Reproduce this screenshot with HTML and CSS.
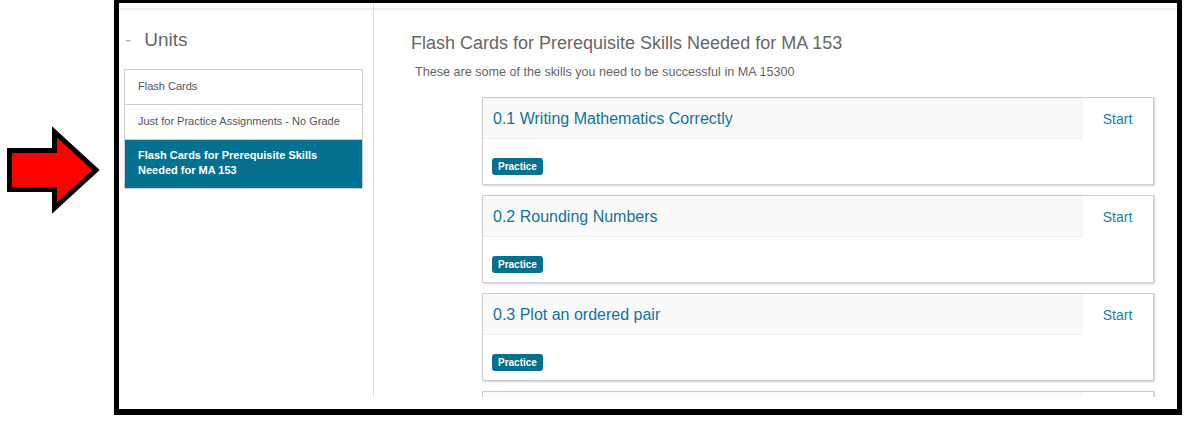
FILE: index.html
```html
<!DOCTYPE html>
<html lang="en">
<head>
  <meta charset="UTF-8">
  <meta name="viewport" content="width=device-width, initial-scale=1">
  <title>Flash Cards for Prerequisite Skills</title>
  <link rel="stylesheet" href="styles.css">
</head>
<body>

<div class="pointer">
  <svg width="110" height="100" viewBox="0 0 110 100">
    <polygon points="9.5,30.5 54.5,30.5 54.5,12 96,50 54.5,88 54.5,69.5 9.5,69.5" fill="#ff0000" stroke="#000" stroke-width="5" stroke-linejoin="miter"></polygon>
  </svg>
</div>

<div class="frame">
  <div class="cols">
    <div class="sidebar">
      <h2 class="units-title"><span class="dash">-</span>Units</h2>
      <div class="unit-list">
        <div class="unit">Flash Cards</div>
        <div class="unit">Just for Practice Assignments - No Grade</div>
        <div class="unit active">Flash Cards for Prerequisite Skills Needed for MA 153</div>
      </div>
    </div>

    <div class="main">
      <h1 class="page-title">Flash Cards for Prerequisite Skills Needed for MA 153</h1>
      <p class="intro">These are some of the skills you need to be successful in MA 15300</p>

      <div class="cards">
        <div class="card">
          <div class="card-head">
            <div class="card-title">0.1 Writing Mathematics Correctly</div>
            <div class="card-start">Start</div>
          </div>
          <div class="card-body"><span class="badge">Practice</span></div>
        </div>
        <div class="card">
          <div class="card-head">
            <div class="card-title">0.2 Rounding Numbers</div>
            <div class="card-start">Start</div>
          </div>
          <div class="card-body"><span class="badge">Practice</span></div>
        </div>
        <div class="card">
          <div class="card-head">
            <div class="card-title">0.3 Plot an ordered pair</div>
            <div class="card-start">Start</div>
          </div>
          <div class="card-body"><span class="badge">Practice</span></div>
        </div>
        <!-- next card is cut off by the scroll area -->
        <div class="card">
          <div class="card-head">
            <div class="card-title"></div>
            <div class="card-start"></div>
          </div>
          <div class="card-body"></div>
        </div>
      </div>
    </div>
  </div>
</div>

</body>
</html>
```

FILE: styles.css
```css
body {
  margin: 0;
  font-family: "Liberation Sans", Arial, sans-serif;
  background: #fff;
  display: flex;
  align-items: flex-start;
}
.pointer {
  width: 114px;
  flex-shrink: 0;
}
.pointer svg {
  display: block;
  margin-top: 120px;
}
.frame {
  width: 1068px;
  box-sizing: border-box;
  border: 5px solid #000;
  border-top-width: 3px;
  border-bottom-width: 6px;
  padding-bottom: 12px;
  flex-shrink: 0;
}
.cols {
  display: flex;
  height: 394px;
  overflow: hidden;
  background: linear-gradient(#eee, #eee) no-repeat 0 5px / 100% 2px;
}
.sidebar {
  width: 255px;
  box-sizing: border-box;
  border-right: 1px solid #ddd;
  padding: 26px 10px 0 5px;
  flex-shrink: 0;
}
.units-title {
  margin: 0 0 18px;
  font-size: 19px;
  line-height: 22px;
  font-weight: normal;
  color: #666;
}
.units-title .dash {
  color: #aaa;
  padding: 0 13px 0 1px;
}
.unit-list {
  border: 1px solid #ccc;
}
.unit {
  font-size: 11px;
  line-height: 14px;
  color: #555;
  padding: 9px 13px 11px;
  border-top: 1px solid #ccc;
}
.unit:first-child {
  border-top: none;
}
.unit.active {
  background: #047191;
  color: #fff;
  font-weight: bold;
  line-height: 15px;
  padding: 8px 24px 10px 13px;
}
.main {
  flex: 1;
  padding-top: 29px;
}
.page-title {
  margin: 0 0 10px 37px;
  font-size: 18px;
  line-height: 22px;
  font-weight: normal;
  color: #666;
}
.intro {
  margin: 0 0 17px 41px;
  font-size: 12.6px;
  line-height: 16px;
  color: #666;
}
.cards {
  margin: 0 23px 0 108px;
  display: flex;
  flex-direction: column;
  gap: 10px;
}
.card {
  border: 1px solid #ccc;
  box-shadow: 1px 1px 2px rgba(0,0,0,0.18);
  background: #fff;
}
.card-head {
  display: flex;
  height: 41px;
}
.card-title {
  flex: 1;
  box-sizing: border-box;
  background: #fafafa;
  border-bottom: 1px solid #eee;
  border-right: 1px solid #eee;
  padding: 11px 10px 9px;
  font-size: 16px;
  line-height: 20px;
  color: #13729a;
}
.card-start {
  width: 71px;
  text-align: center;
  padding-top: 11px;
  font-size: 14px;
  line-height: 20px;
  color: #1a7fa8;
}
.card-body {
  padding: 19px 9px 9px;
  height: 17px;
}
.badge {
  display: inline-block;
  background: #047191;
  color: #fff;
  font-size: 10px;
  font-weight: bold;
  line-height: 13px;
  padding: 2px 6px;
  border-radius: 3px;
  vertical-align: top;
}
```
